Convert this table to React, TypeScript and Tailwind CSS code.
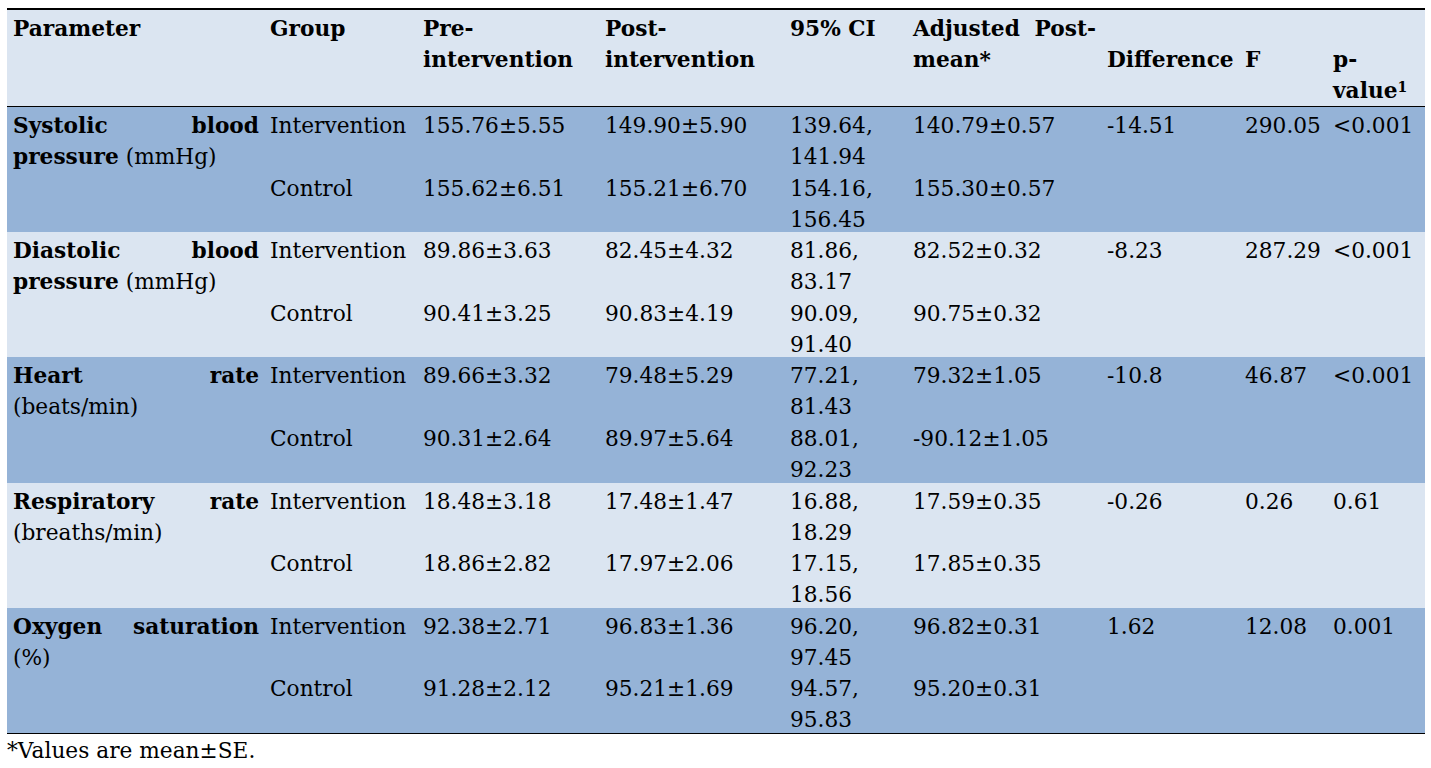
const rows = [
  {
    name: 'Systolic blood pressure',
    unit: '(mmHg)',
    dark: true,
    diff: '-14.51',
    f: '290.05',
    p: '<0.001',
    sub: [
      ['Intervention', '155.76±5.55', '149.90±5.90', '139.64, 141.94', '140.79±0.57'],
      ['Control', '155.62±6.51', '155.21±6.70', '154.16, 156.45', '155.30±0.57'],
    ],
  },
  {
    name: 'Diastolic blood pressure',
    unit: '(mmHg)',
    dark: false,
    diff: '-8.23',
    f: '287.29',
    p: '<0.001',
    sub: [
      ['Intervention', '89.86±3.63', '82.45±4.32', '81.86, 83.17', '82.52±0.32'],
      ['Control', '90.41±3.25', '90.83±4.19', '90.09, 91.40', '90.75±0.32'],
    ],
  },
  {
    name: 'Heart rate',
    unit: '(beats/min)',
    dark: true,
    diff: '-10.8',
    f: '46.87',
    p: '<0.001',
    sub: [
      ['Intervention', '89.66±3.32', '79.48±5.29', '77.21, 81.43', '79.32±1.05'],
      ['Control', '90.31±2.64', '89.97±5.64', '88.01, 92.23', '-90.12±1.05'],
    ],
  },
  {
    name: 'Respiratory rate',
    unit: '(breaths/min)',
    dark: false,
    diff: '-0.26',
    f: '0.26',
    p: '0.61',
    sub: [
      ['Intervention', '18.48±3.18', '17.48±1.47', '16.88, 18.29', '17.59±0.35'],
      ['Control', '18.86±2.82', '17.97±2.06', '17.15, 18.56', '17.85±0.35'],
    ],
  },
  {
    name: 'Oxygen saturation',
    unit: '(%)',
    dark: true,
    diff: '1.62',
    f: '12.08',
    p: '0.001',
    sub: [
      ['Intervention', '92.38±2.71', '96.83±1.36', '96.20, 97.45', '96.82±0.31'],
      ['Control', '91.28±2.12', '95.21±1.69', '94.57, 95.83', '95.20±0.31'],
    ],
  },
];

const cell = 'align-top p-0 pl-[6px] pr-[5px]';
const head = 'align-top pl-[6px] pr-[5px] font-bold';

export default function App() {
  return (
    <div
      className="w-[1431px] h-[768px] bg-white text-black pl-[7px] pt-[8px] text-[21.7px] leading-[31px]"
      style={{ fontFamily: '"DejaVu Serif", "Liberation Serif", serif' }}
    >
      <table className="table-fixed border-collapse w-[1418px] border-t-2 border-b border-black">
        <colgroup>
          <col className="w-[257px]" />
          <col className="w-[153px]" />
          <col className="w-[182px]" />
          <col className="w-[185px]" />
          <col className="w-[123px]" />
          <col className="w-[194px]" />
          <col className="w-[138px]" />
          <col className="w-[88px]" />
          <col className="w-[98px]" />
        </colgroup>
        <thead>
          <tr className="bg-[#dbe5f1] border-b border-black">
            <th className={`${head} text-left pt-[3px]`}>
              <div className="h-[91px]">Parameter</div>
            </th>
            <th className={`${head} text-left pt-[3px]`}>Group</th>
            <th className={`${head} text-left pt-[3px]`}>Pre-intervention</th>
            <th className={`${head} text-left pt-[3px]`}>Post-intervention</th>
            <th className={`${head} text-left pt-[3px]`}>95% CI</th>
            <th className={`${head} text-justify pt-[3px]`}>Adjusted Post-mean*</th>
            <th className={`${head} text-left pt-[34px]`}>Difference</th>
            <th className={`${head} text-left pt-[34px]`}>F</th>
            <th className={`${head} text-left pt-[34px]`}>
              p-value<span className="text-[14px] align-top leading-[24px]">1</span>
            </th>
          </tr>
        </thead>
        <tbody>
          {rows.map((r) =>
            r.sub.map((s, i) => (
              <tr key={r.name + i} className={r.dark ? 'bg-[#95b3d7]' : 'bg-[#dbe5f1]'}>
                {i === 0 && (
                  <td rowSpan={2} className={`${cell} text-justify`}>
                    <div className="pt-[3px]">
                      {r.name.split(' ').map((w) => (
                        <span key={w}>
                          <b className="font-bold">{w}</b>{' '}
                        </span>
                      ))}
                      {r.unit}
                    </div>
                  </td>
                )}
                {s.map((v, j) => (
                  <td key={j} className={cell}>
                    <div className="h-[62.6px] pt-[3px]">{v}</div>
                  </td>
                ))}
                <td className={cell}>
                  <div className="pt-[3px]">{i === 0 ? r.diff : ''}</div>
                </td>
                <td className={cell}>
                  <div className="pt-[3px]">{i === 0 ? r.f : ''}</div>
                </td>
                <td className={cell}>
                  <div className="pt-[3px]">{i === 0 ? r.p : ''}</div>
                </td>
              </tr>
            ))
          )}
        </tbody>
      </table>
      <div className="pt-[1px]">*Values are mean±SE.</div>
    </div>
  );
}
